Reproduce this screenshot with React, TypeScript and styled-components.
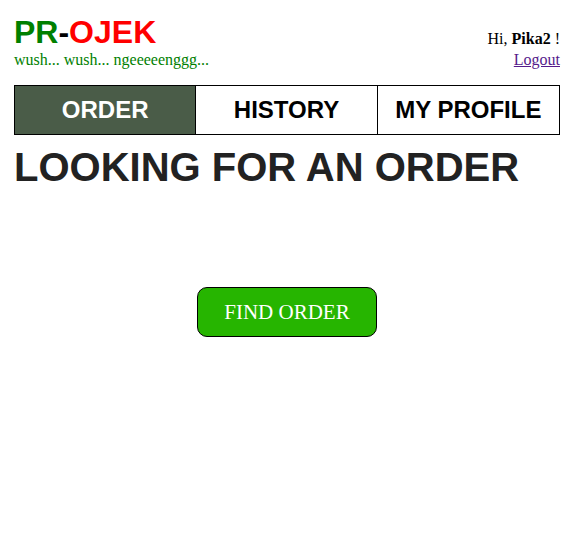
import React from "react";
import styled, { createGlobalStyle } from "styled-components";

const GlobalStyle = createGlobalStyle`
  body {
    margin: 0;
    background: #fff;
    color: #000;
    font: 16px/20px "Liberation Serif", "Times New Roman", serif;
  }
`;

const Page = styled.div`
  padding: 14px 16px 0 14px;
`;

const Header = styled.header`
  display: flex;
  justify-content: space-between;
  align-items: flex-end;
  margin-bottom: 15px;
`;

const Logo = styled.div`
  font: bold 32px/36px "Liberation Sans", Arial, sans-serif;
`;

const LogoPart = styled.span<{ $color: string }>`
  color: ${(p) => p.$color};
`;

const Tagline = styled.div`
  color: green;
`;

const Account = styled.div`
  line-height: 21px;
  text-align: right;
`;

const LogoutLink = styled.a`
  color: #551a8b;
`;

const Tabs = styled.nav`
  display: grid;
  grid-template-columns: repeat(3, 1fr);
  border: 1px solid #000;
`;

const Tab = styled.a<{ $active?: boolean }>`
  text-align: center;
  text-decoration: none;
  font: bold 24px/48px "Liberation Sans", Arial, sans-serif;
  color: ${(p) => (p.$active ? "#fff" : "#000")};
  background: ${(p) => (p.$active ? "#4a5c48" : "#fff")};

  &:not(:last-child) {
    border-right: 1px solid #000;
  }
`;

const Title = styled.h1`
  margin: 8px 0 96px;
  font: bold 40px/48px "Liberation Sans", Arial, sans-serif;
  color: #222;
`;

const FindButton = styled.button`
  display: block;
  margin: 0 auto;
  padding: 0 26px;
  border: 1px solid #000;
  border-radius: 10px;
  background: #26b500;
  color: #fff;
  font: 21px/48px "Liberation Serif", "Times New Roman", serif;
  cursor: pointer;
`;

export default function App() {
  return (
    <>
      <GlobalStyle />
      <Page>
        <Header>
          <div>
            <Logo>
              <LogoPart $color="green">PR</LogoPart>-<LogoPart $color="red">OJEK</LogoPart>
            </Logo>
            <Tagline>wush... wush... ngeeeeenggg...</Tagline>
          </div>
          <Account>
            <div>
              Hi, <b>Pika2</b> !
            </div>
            <LogoutLink href="#logout">Logout</LogoutLink>
          </Account>
        </Header>
        <Tabs>
          <Tab $active href="#order">ORDER</Tab>
          <Tab href="#history">HISTORY</Tab>
          <Tab href="#profile">MY PROFILE</Tab>
        </Tabs>
        <main>
          <Title>LOOKING FOR AN ORDER</Title>
          <FindButton type="button">FIND ORDER</FindButton>
        </main>
      </Page>
    </>
  );
}
